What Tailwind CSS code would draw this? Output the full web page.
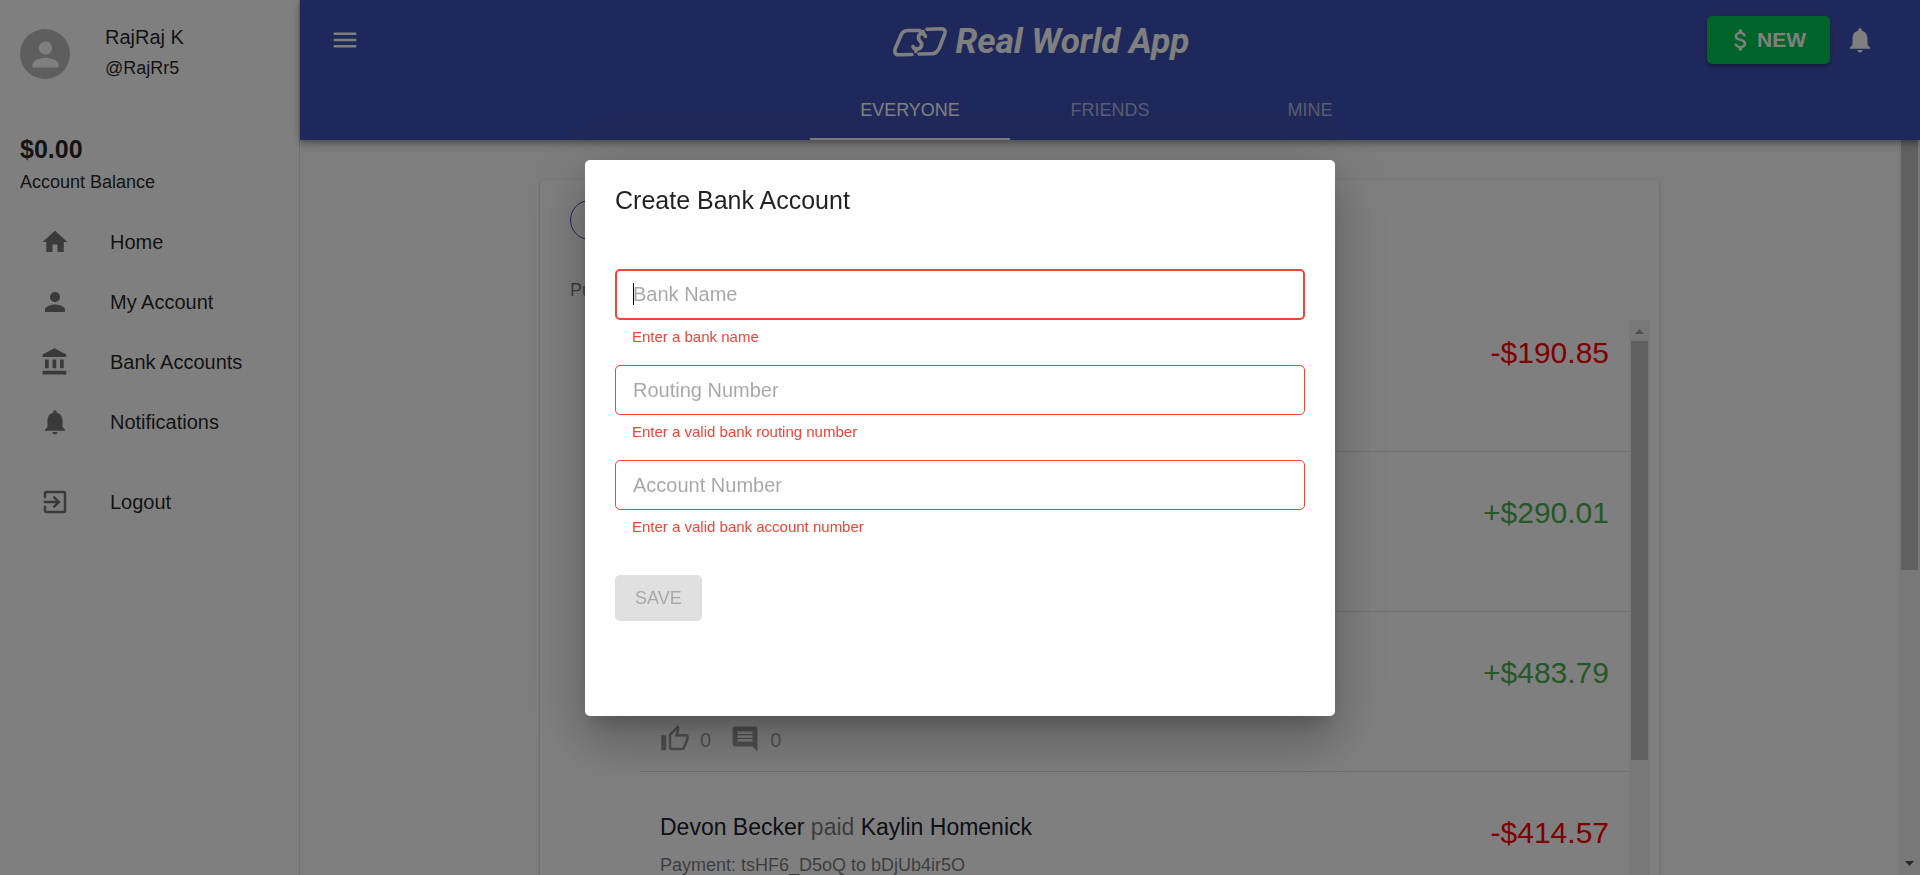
<!DOCTYPE html>
<html lang="en">
<head>
<meta charset="utf-8">
<title>Real World App</title>
<script src="https://cdn.jsdelivr.net/npm/@tailwindcss/browser@4"></script>
</head>
<body class="h-screen overflow-hidden bg-[#fafafa] font-['Liberation_Sans',Arial,sans-serif] text-xl text-black/87">
<svg class="hidden" aria-hidden="true">
  <symbol id="bell" viewBox="0 0 24 24"><path d="M12 22c1.1 0 2-.9 2-2h-4c0 1.1.89 2 2 2zm6-6v-5c0-3.07-1.64-5.64-4.5-6.32V4c0-.83-.67-1.5-1.5-1.5s-1.5.67-1.5 1.5v.68C7.63 5.36 6 7.92 6 11v5l-2 2v1h16v-1l-2-2z"/></symbol>
  <symbol id="person" viewBox="0 0 24 24"><path d="M12 12c2.21 0 4-1.79 4-4s-1.79-4-4-4-4 1.79-4 4 1.79 4 4 4zm0 2c-2.67 0-8 1.34-8 4v2h16v-2c0-2.66-5.33-4-8-4z"/></symbol>
  <symbol id="like" viewBox="0 0 24 24"><path d="M9 21h9c.83 0 1.54-.5 1.84-1.22l3.02-7.05c.09-.23.14-.47.14-.73v-2c0-1.1-.9-2-2-2h-6.31l.95-4.57.03-.32c0-.41-.17-.79-.44-1.06L14.17 1 7.58 7.59C7.22 7.95 7 8.45 7 9v10c0 1.1.9 2 2 2zM9 9l4.34-4.34L12 10h9v2l-3 7H9V9zM1 9h4v12H1z"/></symbol>
  <symbol id="comment" viewBox="0 0 24 24"><path d="M21.99 4c0-1.1-.89-2-1.99-2H4c-1.1 0-2 .9-2 2v12c0 1.1.9 2 2 2h14l4 4-.01-18zM18 14H6v-2h12v2zm0-3H6V9h12v2zm0-3H6V6h12v2z"/></symbol>
</svg>
<div class="flex h-full">
  <aside class="w-[300px] shrink-0 border-r border-black/12 bg-white">
    <div class="flex gap-[35px] px-5 pt-[22px]">
      <span class="mt-[7px] flex size-[50px] items-center justify-center rounded-full bg-[#bdbdbd] text-white">
        <svg class="size-[39px]" fill="currentColor"><use href="#person"/></svg>
      </span>
      <div>
        <p class="leading-[30px]">RajRaj K</p>
        <p class="text-lg leading-8">@RajRr5</p>
      </div>
    </div>
    <div class="px-5 pt-[46px]">
      <p class="text-[25px] leading-[38px] font-bold">$0.00</p>
      <p class="text-lg leading-7">Account Balance</p>
    </div>
    <nav class="pt-4">
      <a href="#" class="flex h-[60px] items-center gap-10 pl-10"><svg class="size-[30px] text-black/54" viewBox="0 0 24 24" fill="currentColor"><path d="M10 20v-6h4v6h5v-8h3L12 3 2 12h3v8z"/></svg>Home</a>
      <a href="#" class="flex h-[60px] items-center gap-10 pl-10"><svg class="size-[30px] text-black/54" fill="currentColor"><use href="#person"/></svg>My Account</a>
      <a href="#" class="flex h-[60px] items-center gap-10 pl-10"><svg class="size-[30px] text-black/54" viewBox="0 0 24 24" fill="currentColor"><path d="M4 10v7h3v-7H4zm6 0v7h3v-7h-3zM2 22h19v-3H2v3zm14-12v7h3v-7h-3zm-4.500-9L2 6v2h19V6l-9.500-5z"/></svg>Bank Accounts</a>
      <a href="#" class="flex h-[60px] items-center gap-10 pl-10"><svg class="size-[30px] text-black/54" fill="currentColor"><use href="#bell"/></svg>Notifications</a>
      <a href="#" class="mt-5 flex h-[60px] items-center gap-10 pl-10"><svg class="size-[30px] text-black/54" viewBox="0 0 24 24" fill="currentColor"><path d="M10.090 15.590L11.500 17l5-5-5-5-1.410 1.410L12.670 11H3v2h9.670l-2.580 2.590zM19 3H5c-1.110 0-2 .9-2 2v4h2V5h14v14H5v-4H3v4c0 1.100.89 2 2 2h14c1.100 0 2-.9 2-2V5c0-1.100-.9-2-2-2z"/></svg>Logout</a>
    </nav>
  </aside>

  <div class="flex min-w-0 flex-1 flex-col">
    <header class="z-10 bg-[#3f51b5] text-white shadow-[0_2px_5px_rgba(0,0,0,0.2),0_5px_6px_rgba(0,0,0,0.14),0_1px_12px_rgba(0,0,0,0.12)]">
      <div class="flex h-20 items-center pr-[45px] pl-[30px]">
        <button type="button" aria-label="Menu"><svg class="size-[30px]" viewBox="0 0 24 24" fill="currentColor"><path d="M3 18h18v-2H3v2zm0-5h18v-2H3v2zm0-7v2h18V6H3z"/></svg></button>
        <h1 class="flex flex-1 items-center justify-center gap-2 pt-[3px] pl-[14px] font-['Roboto',sans-serif] text-[35px] leading-10 font-bold italic">
          <svg class="h-8 w-[56px]" viewBox="0 0 56 32" fill="none" stroke="currentColor" stroke-width="3.600" stroke-linecap="round" stroke-linejoin="round"><path d="M28 4.500H16C12.500 4.500 10.500 6 9.300 8.500L3.300 22.500C2 26 3 28.800 6.500 28.800L20 28.500M35 3.200L49 2.700C52.500 2.700 54 4.800 52.800 8L47.500 21.500C46 25.500 43.500 27.700 39.500 27.700L27 28M33.500 10.500C32.500 6.500 27.500 6.500 26.500 10.500C25.500 15.500 31 15 29.500 19.500C28.500 24 22 24.500 21 20.500M31.200 5.500L30.500 8M24.500 22.500L23.800 25.500"/></svg>
          Real World App
        </h1>
        <button type="button" class="flex h-12 w-[123px] items-center justify-center gap-[2px] rounded-[5px] bg-[#00c853] pr-1 text-[21px] font-bold shadow-[0_3px_3px_rgba(0,0,0,0.2),0_1px_6px_rgba(0,0,0,0.12)]"><svg class="size-7" viewBox="0 0 24 24" fill="currentColor"><path d="M11.800 10.900c-2.270-.59-3-1.200-3-2.150 0-1.090 1.010-1.850 2.700-1.850 1.780 0 2.440.85 2.500 2.100h2.210c-.07-1.720-1.120-3.300-3.210-3.810V3h-3v2.160c-1.940.42-3.500 1.680-3.500 3.610 0 2.310 1.910 3.460 4.700 4.130 2.500.6 3 1.480 3 2.410 0 .69-.49 1.790-2.700 1.790-2.060 0-2.870-.92-2.980-2.100h-2.200c.12 2.190 1.760 3.420 3.680 3.830V21h3v-2.150c1.950-.37 3.500-1.500 3.500-3.550 0-2.840-2.430-3.810-4.700-4.400z"/></svg>NEW</button>
        <button type="button" aria-label="Notifications" class="ml-[15px]"><svg class="size-[30px]" fill="currentColor"><use href="#bell"/></svg></button>
      </div>
      <nav class="flex h-[60px] justify-center text-lg">
        <a href="#" class="flex w-[200px] items-center justify-center border-y-2 border-t-transparent border-b-white">EVERYONE</a>
        <a href="#" class="flex w-[200px] items-center justify-center text-white/60">FRIENDS</a>
        <a href="#" class="flex w-[200px] items-center justify-center text-white/60">MINE</a>
      </nav>
    </header>

    <div class="flex min-h-0 flex-1">
      <main class="min-w-0 flex-1 overflow-hidden px-[240px] pt-10">
        <section class="rounded-[5px] bg-white pr-[9px] pb-5 pl-[30px] shadow-[0_1px_3px_rgba(0,0,0,0.2),0_1px_2px_rgba(0,0,0,0.14)]">
          <div class="pt-5"><button type="button" class="h-10 rounded-full border border-[#3f51b5] px-4 text-base text-[#3f51b5]">Date: ALL</button></div>
          <h2 class="mt-5 flex h-[60px] items-center text-lg text-black/54">Public</h2>
          <div class="flex">
            <ul class="ml-[70px] h-[650px] flex-1 overflow-hidden pt-px">
              <li class="flex h-[131px] justify-between border-b border-black/12 px-5"><div></div><span class="text-3xl leading-[64px] text-[red]">-$190.85</span></li>
              <li class="flex h-40 justify-between border-b border-black/12 px-5 pt-[29px]"><div></div><span class="text-3xl leading-[64px] text-[#4caf50]">+$290.01</span></li>
              <li class="flex h-40 justify-between border-b border-black/12 px-5 pt-[29px]">
                <div class="flex items-end gap-[10px] pb-[17px] text-black/38">
                  <svg class="size-[30px]" fill="currentColor"><use href="#like"/></svg><span>0</span>
                  <svg class="ml-[9px] size-[30px]" fill="currentColor"><use href="#comment"/></svg><span>0</span>
                </div>
                <span class="text-3xl leading-[64px] text-[#4caf50]">+$483.79</span></li>
              <li class="flex h-40 justify-between px-5 pt-[29px]">
                <div>
                  <p class="pt-[10px] text-[23px] leading-8 text-black/54"><span class="text-[#1a202c]">Devon Becker</span> paid <span class="text-[#1a202c]">Kaylin Homenick</span></p>
                  <p class="pt-1 text-lg leading-9 text-black/54">Payment: tsHF6_D5oQ to bDjUb4ir5O</p>
                </div>
                <span class="text-3xl leading-[64px] text-[red]">-$414.57</span></li>
            </ul>
            <div class="flex w-[21px] flex-col items-center bg-[#f1f1f1]" aria-hidden="true">
              <svg class="size-[21px]" viewBox="0 0 21 21" fill="#a3a3a3"><path d="M6 14h9l-4.500-5z"/></svg>
              <div class="h-[419px] w-[17px] bg-[#c1c1c1]"></div>
            </div>
          </div>
        </section>
      </main>
      <div class="flex w-[21px] flex-col items-center justify-between bg-[#f1f1f1]" aria-hidden="true">
        <div class="h-[430px] w-[17px] bg-[#c1c1c1]"></div>
        <svg class="size-[21px]" viewBox="0 0 21 21" fill="#505050"><path d="M6 7h9l-4.500 5z"/></svg>
      </div>
    </div>
  </div>
</div>

<div class="fixed inset-0 z-20 flex items-start justify-center bg-black/50 pt-40">
  <form role="dialog" aria-labelledby="dialog-title" class="flex w-[750px] flex-col rounded-[5px] bg-white px-[30px] pt-5 pb-[95px] shadow-[0_14px_19px_-9px_rgba(0,0,0,0.2),0_30px_48px_4px_rgba(0,0,0,0.14),0_11px_58px_10px_rgba(0,0,0,0.12)]">
    <h2 id="dialog-title" class="text-[25px] leading-10">Create Bank Account</h2>
    <div class="relative mt-[49px]">
      <input id="bank" aria-label="Bank Name" aria-describedby="bank-error" placeholder="Bank Name" class="block h-[51px] w-full rounded-[5px] border-2 border-[#f44336] px-4 outline-none placeholder:text-black/35">
      <span class="absolute top-[14px] left-[18px] h-[22px] w-px bg-black"></span>
    </div>
    <p id="bank-error" class="mt-1 px-[17px] text-[15px] leading-[25px] text-[#f44336]">Enter a bank name</p>
    <input id="routing" aria-label="Routing Number" aria-describedby="routing-error" placeholder="Routing Number" class="mt-4 block h-[50px] w-full rounded-[5px] border border-[#f44336] px-[17px] outline-none placeholder:text-black/35">
    <p id="routing-error" class="mt-1 px-[17px] text-[15px] leading-[25px] text-[#f44336]">Enter a valid bank routing number</p>
    <input id="account" aria-label="Account Number" aria-describedby="account-error" placeholder="Account Number" class="mt-4 block h-[50px] w-full rounded-[5px] border border-[#f44336] px-[17px] outline-none placeholder:text-black/35">
    <p id="account-error" class="mt-1 px-[17px] text-[15px] leading-[25px] text-[#f44336]">Enter a valid bank account number</p>
    <button type="submit" disabled class="mt-9 h-[46px] self-start rounded-[5px] bg-[#e0e0e0] px-5 text-lg text-black/26">SAVE</button>
  </form>
</div>
</body>
</html>
